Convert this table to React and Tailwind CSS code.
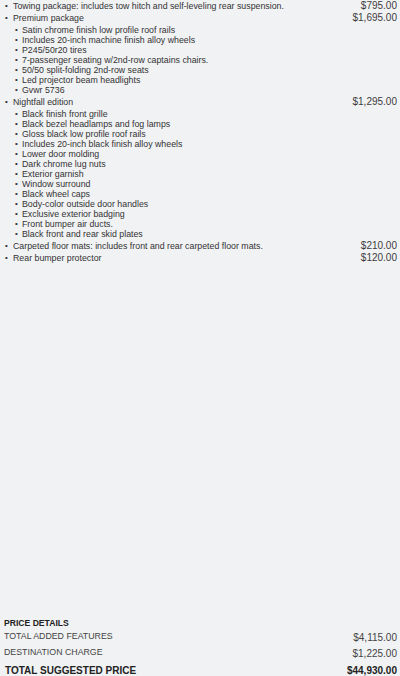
import React from "react";

const items = [
  { t: "Towing package: includes tow hitch and self-leveling rear suspension.", p: "$795.00" },
  {
    t: "Premium package",
    p: "$1,695.00",
    sub: [
      "Satin chrome finish low profile roof rails",
      "Includes 20-inch machine finish alloy wheels",
      "P245/50r20 tires",
      "7-passenger seating w/2nd-row captains chairs.",
      "50/50 split-folding 2nd-row seats",
      "Led projector beam headlights",
      "Gvwr 5736",
    ],
  },
  {
    t: "Nightfall edition",
    p: "$1,295.00",
    sub: [
      "Black finish front grille",
      "Black bezel headlamps and fog lamps",
      "Gloss black low profile roof rails",
      "Includes 20-inch black finish alloy wheels",
      "Lower door molding",
      "Dark chrome lug nuts",
      "Exterior garnish",
      "Window surround",
      "Black wheel caps",
      "Body-color outside door handles",
      "Exclusive exterior badging",
      "Front bumper air ducts.",
      "Black front and rear skid plates",
    ],
  },
  { t: "Carpeted floor mats: includes front and rear carpeted floor mats.", p: "$210.00" },
  { t: "Rear bumper protector", p: "$120.00" },
];

export default function App() {
  return (
    <div
      className="h-[676px] w-[400px] bg-[#f1f2f3] flex flex-col overflow-hidden text-[#333]"
      style={{ fontFamily: '"Liberation Sans", Arial, sans-serif' }}
    >
      <div className="flex flex-col">
        {items.map((it, i) => (
          <div key={i} className="flex justify-between pr-[3px]">
            <div className="flex flex-col">
              <div className="flex items-center h-[12px] text-[8.8px] leading-[12px]">
                <span className="w-[13px] pl-[5px] text-[8px]">•</span>
                <span>{it.t}</span>
              </div>
              {it.sub && (
                <div className="flex flex-col my-px">
                  {it.sub.map((s, j) => (
                    <div key={j} className="flex items-center h-[10px] text-[8.8px] leading-[10px]">
                      <span className="w-[22px] pl-[15px] text-[8px]">•</span>
                      <span>{s}</span>
                    </div>
                  ))}
                </div>
              )}
            </div>
            <div className="h-[12px] text-[10px] leading-[12px] text-[#3d3d3d]">{it.p}</div>
          </div>
        ))}
      </div>

      <div className="mt-auto flex flex-col pr-[3px]">
        <div className="h-[12px] flex items-center pl-[4px] text-[8.6px] font-bold text-[#222]">PRICE DETAILS</div>
        <div className="h-[16px] flex items-center justify-between pl-[4px] text-[#444]">
          <span className="text-[8.8px]">TOTAL ADDED FEATURES</span>
          <span className="text-[10px]">$4,115.00</span>
        </div>
        <div className="h-[16px] flex items-center justify-between pl-[4px] text-[#444]">
          <span className="text-[8.8px]">DESTINATION CHARGE</span>
          <span className="text-[10px]">$1,225.00</span>
        </div>
        <div className="h-[12px] mt-[3px] flex items-center justify-between pl-[5px] text-[#222] font-bold text-[10px]">
          <span>TOTAL SUGGESTED PRICE</span>
          <span>$44,930.00</span>
        </div>
      </div>
    </div>
  );
}
